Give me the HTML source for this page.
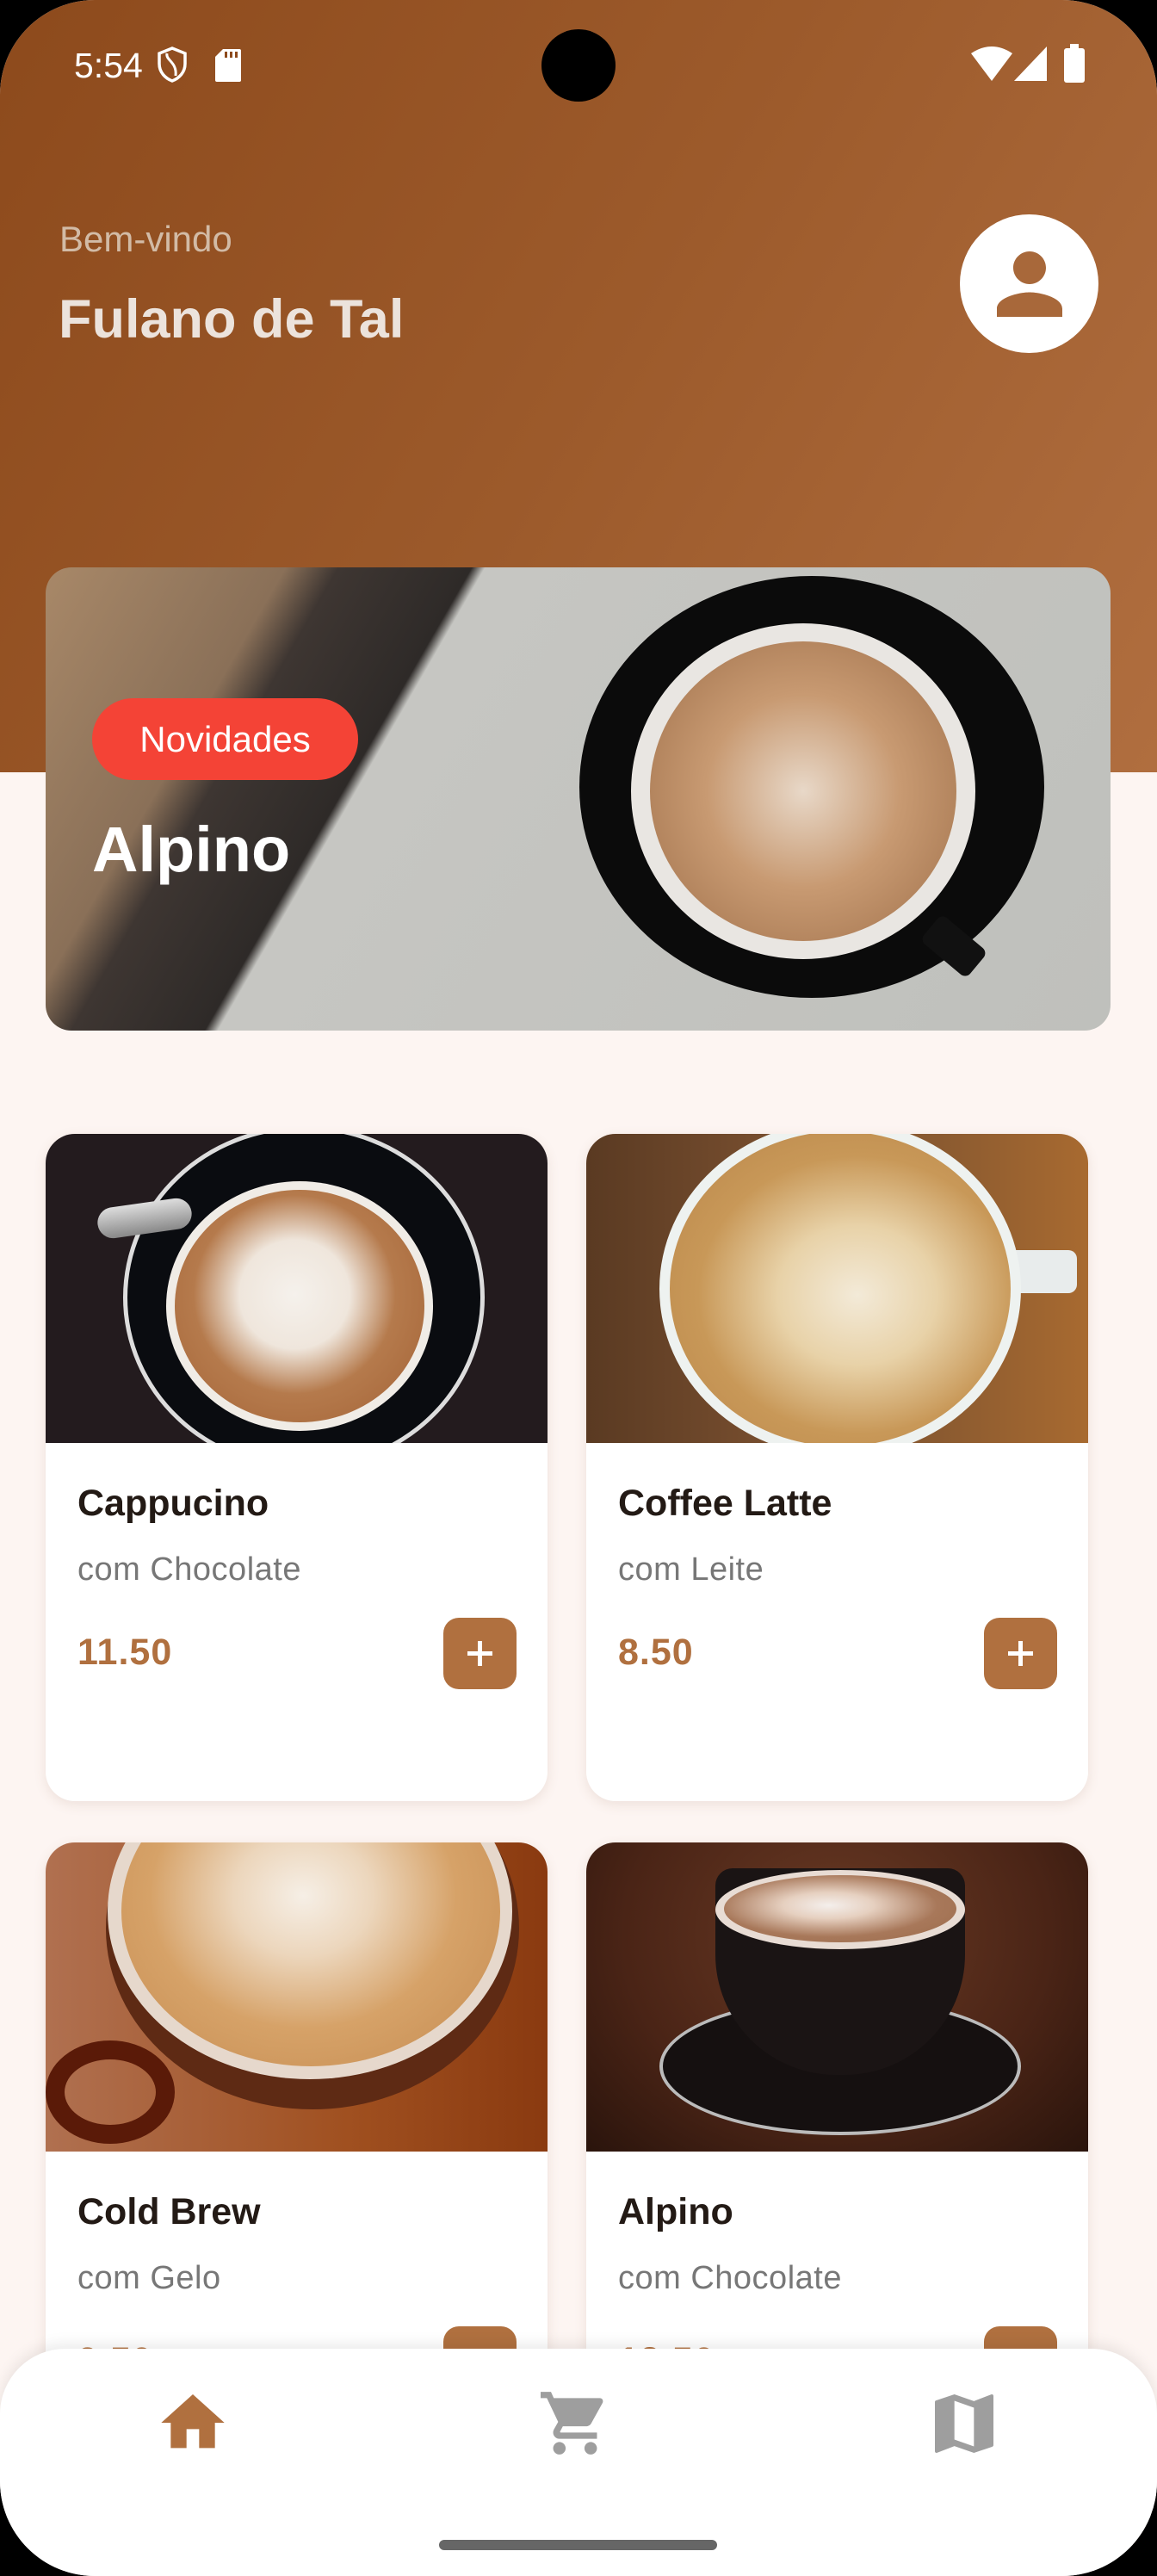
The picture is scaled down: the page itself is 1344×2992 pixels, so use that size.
<!DOCTYPE html>
<html><head><meta charset="utf-8">
<style>
*{margin:0;padding:0;box-sizing:border-box}
html,body{width:1344px;height:2992px;overflow:hidden;background:#000}
#scr{position:absolute;left:0;top:0;width:1344px;height:2992px;border-radius:110px;overflow:hidden;background:#fdf5f2;font-family:"Liberation Sans",Roboto,sans-serif}
#hdr{position:absolute;left:0;top:0;width:1344px;height:897px;background:linear-gradient(120deg,#8d4a1c 0%,#9c5a2b 50%,#b06e3f 100%)}
.a{position:absolute}
.card{position:absolute;width:583px;height:775px;background:#fff;border-radius:34px;overflow:hidden;box-shadow:0 4px 14px rgba(120,80,60,.12)}
.img{position:absolute;left:0;top:0;width:583px;height:359px;overflow:hidden}
.t{position:absolute;left:37px;top:405px;font-size:43px;font-weight:bold;color:#231a15}
.s{position:absolute;left:37px;top:485px;font-size:38px;color:#777;letter-spacing:.5px}
.p{position:absolute;left:37px;top:578px;font-size:43px;font-weight:bold;color:#b0703f;letter-spacing:1px}
.b{position:absolute;left:462px;top:562px;width:85px;height:83px;border-radius:18px;background:#b0703f}
.b:before{content:"";position:absolute;left:28px;top:39px;width:29px;height:5px;background:#fff}
.b:after{content:"";position:absolute;left:40px;top:27px;width:5px;height:29px;background:#fff}
</style></head><body>
<div id="scr">
<div id="hdr"></div>
<div class="a" style="left:86px;top:53px;font-size:41px;color:#fff">5:54</div>
<svg class="a" style="left:182px;top:54px" width="36" height="42" viewBox="0 0 36 42"><path d="M18 2 L33 8 V20 C33 30 26 37 18 40 C10 37 3 30 3 20 V8 Z" fill="none" stroke="#fff" stroke-width="3.5"/><path d="M12 8 C10 16 24 18 22 34" fill="none" stroke="#fff" stroke-width="3"/></svg>
<svg class="a" style="left:250px;top:57px" width="30" height="38" viewBox="0 0 30 38"><path d="M9 0 H28 A2 2 0 0 1 30 2 V36 A2 2 0 0 1 28 38 H2 A2 2 0 0 1 0 36 V9 Z" fill="#fff"/><rect x="11" y="3" width="3" height="7" fill="#8d4a1c"/><rect x="17" y="3" width="3" height="7" fill="#8d4a1c"/><rect x="23" y="3" width="3" height="7" fill="#8d4a1c"/></svg>
<div class="a" style="left:629px;top:34px;width:86px;height:84px;border-radius:50%;background:#000"></div>
<svg class="a" style="left:1128px;top:54px" width="48" height="40" viewBox="0 0 48 40"><path d="M0 8 Q24 -8 48 8 L24 40 Z" fill="#fff"/></svg>
<svg class="a" style="left:1178px;top:54px" width="38" height="40" viewBox="0 0 38 40"><path d="M38 0 V40 H0 Z" fill="#fff"/></svg>
<div class="a" style="left:1236px;top:56px;width:24px;height:40px;background:#fff;border-radius:3px"></div>
<div class="a" style="left:1243px;top:51px;width:10px;height:6px;background:#fff"></div>
<div class="a" style="left:69px;top:254px;font-size:42px;color:#d2bba6">Bem-vindo</div>
<div class="a" style="left:68px;top:335px;font-size:63px;font-weight:bold;color:#ece3dc">Fulano de Tal</div>
<div class="a" style="left:1115px;top:249px;width:161px;height:161px;border-radius:50%;background:#fff"></div>
<svg class="a" style="left:1139px;top:273px" width="114" height="114" viewBox="0 0 24 24"><path d="M12 12c2.2 0 4-1.8 4-4s-1.8-4-4-4-4 1.8-4 4 1.8 4 4 4zm0 2c-2.7 0-8 1.3-8 4v2h16v-2c0-2.7-5.3-4-8-4z" fill="#a8683a"/></svg>
<div class="a" style="left:53px;top:659px;width:1237px;height:538px;border-radius:30px;overflow:hidden;background:linear-gradient(120deg,#a88868 0%,#8a7058 18%,#3e3632 22%,#2e2a28 32%,#c6c6c2 33%,#bfc0bc 100%)">
  <div class="a" style="left:620px;top:10px;width:540px;height:490px;border-radius:50%;background:#0b0b0b"></div>
  <div class="a" style="left:680px;top:65px;width:400px;height:390px;border-radius:50%;background:#e9e6e2"></div>
  <div class="a" style="left:702px;top:86px;width:356px;height:348px;border-radius:50%;background:radial-gradient(circle at 50% 50%,#e8d8c8 0%,#c89a72 45%,#a97a54 85%,#b89070 100%)"></div>
  <div class="a" style="left:1020px;top:420px;width:70px;height:40px;background:#111;transform:rotate(40deg);border-radius:8px"></div>
  <div class="a" style="left:54px;top:152px;width:309px;height:95px;border-radius:48px;background:#f44336;color:#fff;font-size:42px;text-align:center;line-height:95px">Novidades</div>
  <div class="a" style="left:54px;top:285px;font-size:74px;font-weight:bold;color:#fff">Alpino</div>
</div>
<div class="card" style="left:53px;top:1317px">
 <div class="img" style="background:#231b1e">
  <div class="a" style="left:90px;top:-10px;width:420px;height:400px;border-radius:50%;background:#0a0c10;border:5px solid #ddd"></div>
  <div class="a" style="left:60px;top:80px;width:110px;height:36px;border-radius:18px;background:linear-gradient(#ddd,#888);transform:rotate(-8deg)"></div>
  <div class="a" style="left:140px;top:55px;width:310px;height:290px;border-radius:50%;background:#f0ece6"></div>
  <div class="a" style="left:150px;top:65px;width:290px;height:270px;border-radius:50%;background:radial-gradient(ellipse at 48% 45%,#f5f1ec 0%,#efe6dc 30%,#b57a4c 55%,#a8693c 85%,#c49a78 100%)"></div>
 </div>
 <div class="t">Cappucino</div><div class="s">com Chocolate</div><div class="p">11.50</div><div class="b"></div>
</div>
<div class="card" style="left:681px;top:1317px">
 <div class="img" style="background:linear-gradient(90deg,#5a3a22,#7a5030 40%,#8a5a30 70%,#a86a30)">
  <div class="a" style="left:480px;top:135px;width:90px;height:50px;border-radius:10px;background:#e8ecec"></div>
  <div class="a" style="left:85px;top:-15px;width:420px;height:390px;border-radius:50%;background:#eef2f0"></div>
  <div class="a" style="left:97px;top:-3px;width:396px;height:366px;border-radius:50%;background:radial-gradient(ellipse at 55% 52%,#f3ead8 0%,#e8d2a8 30%,#c89858 60%,#b88448 100%)"></div>
 </div>
 <div class="t">Coffee Latte</div><div class="s">com Leite</div><div class="p">8.50</div><div class="b"></div>
</div>
<div class="card" style="left:53px;top:2140px">
 <div class="img" style="background:linear-gradient(90deg,#b07050,#a05020 60%,#8a3a10)">
  <div class="a" style="left:0px;top:230px;width:150px;height:120px;border-radius:50%;border:22px solid #5a1a08"></div>
  <div class="a" style="left:70px;top:-110px;width:480px;height:420px;border-radius:50%;background:#5e2a14"></div>
  <div class="a" style="left:72px;top:-115px;width:470px;height:390px;border-radius:50%;background:#e6d8cc"></div>
  <div class="a" style="left:88px;top:-100px;width:440px;height:360px;border-radius:50%;background:radial-gradient(ellipse at 48% 45%,#f6efe6 0%,#ecd6bc 25%,#d6a268 55%,#c48a50 100%)"></div>
 </div>
 <div class="t">Cold Brew</div><div class="s">com Gelo</div><div class="p">9.50</div><div class="b"></div>
</div>
<div class="card" style="left:681px;top:2140px">
 <div class="img" style="background:radial-gradient(ellipse at 50% 30%,#6a3a24,#4a2416 60%,#2a140c)">
  <div class="a" style="left:85px;top:180px;width:420px;height:160px;border-radius:50%;background:#151010;border:4px solid #bbb"></div>
  <div class="a" style="left:150px;top:30px;width:290px;height:240px;border-radius:20px 20px 140px 140px;background:#1a1414"></div>
  <div class="a" style="left:150px;top:32px;width:290px;height:92px;border-radius:50%;background:#e8dcd4"></div>
  <div class="a" style="left:160px;top:38px;width:270px;height:78px;border-radius:50%;background:radial-gradient(ellipse at 45% 45%,#f4efec 0%,#e6d0c0 25%,#a8785a 60%,#9a6a4a)"></div>
 </div>
 <div class="t">Alpino</div><div class="s">com Chocolate</div><div class="p">12.50</div><div class="b"></div>
</div>
<div class="a" style="left:0;top:2728px;width:1344px;height:264px;background:#fff;border-radius:76px 76px 0 0;box-shadow:0 -6px 16px rgba(0,0,0,.08)"></div>
<svg class="a" style="left:187px;top:2781px" width="74" height="66" viewBox="2 3 20 18"><path d="M10 20v-6h4v6h5v-8h3L12 3 2 12h3v8z" fill="#b0703f"/></svg>
<svg class="a" style="left:628px;top:2776px" width="80" height="77" viewBox="1 1.5 22 21"><path d="M7 18c-1.1 0-2 .9-2 2s.9 2 2 2 2-.9 2-2-.9-2-2-2zM1 2v2h2l3.6 7.6-1.35 2.4C5.1 14.3 5 14.6 5 15c0 1.1.9 2 2 2h12v-2H7.4c-.1 0-.2-.1-.2-.2v-.1l.9-1.7h7.4c.8 0 1.4-.4 1.7-1l3.6-6.5c.1-.2.1-.3.1-.5 0-.6-.4-1-1-1H5.2l-.9-2H1zm16 16c-1.1 0-2 .9-2 2s.9 2 2 2 2-.9 2-2-.9-2-2-2z" fill="#9e9e9e"/></svg>
<svg class="a" style="left:1086px;top:2781px" width="68" height="68" viewBox="3 3 18 18"><path d="M20.5 3l-.16.03L15 5.1 9 3 3.36 4.9c-.21.07-.36.25-.36.48V20.5c0 .28.22.5.5.5l.16-.03L9 18.9l6 2.1 5.640-1.9c.21-.07.36-.25.36-.48V3.5c0-.28-.22-.5-.5-.5zM15 19l-6-2.11V5l6 2.11V19z" fill="#9e9e9e"/></svg>
<div class="a" style="left:510px;top:2950px;width:323px;height:12px;border-radius:6px;background:#666"></div>
</div>
</body></html>
